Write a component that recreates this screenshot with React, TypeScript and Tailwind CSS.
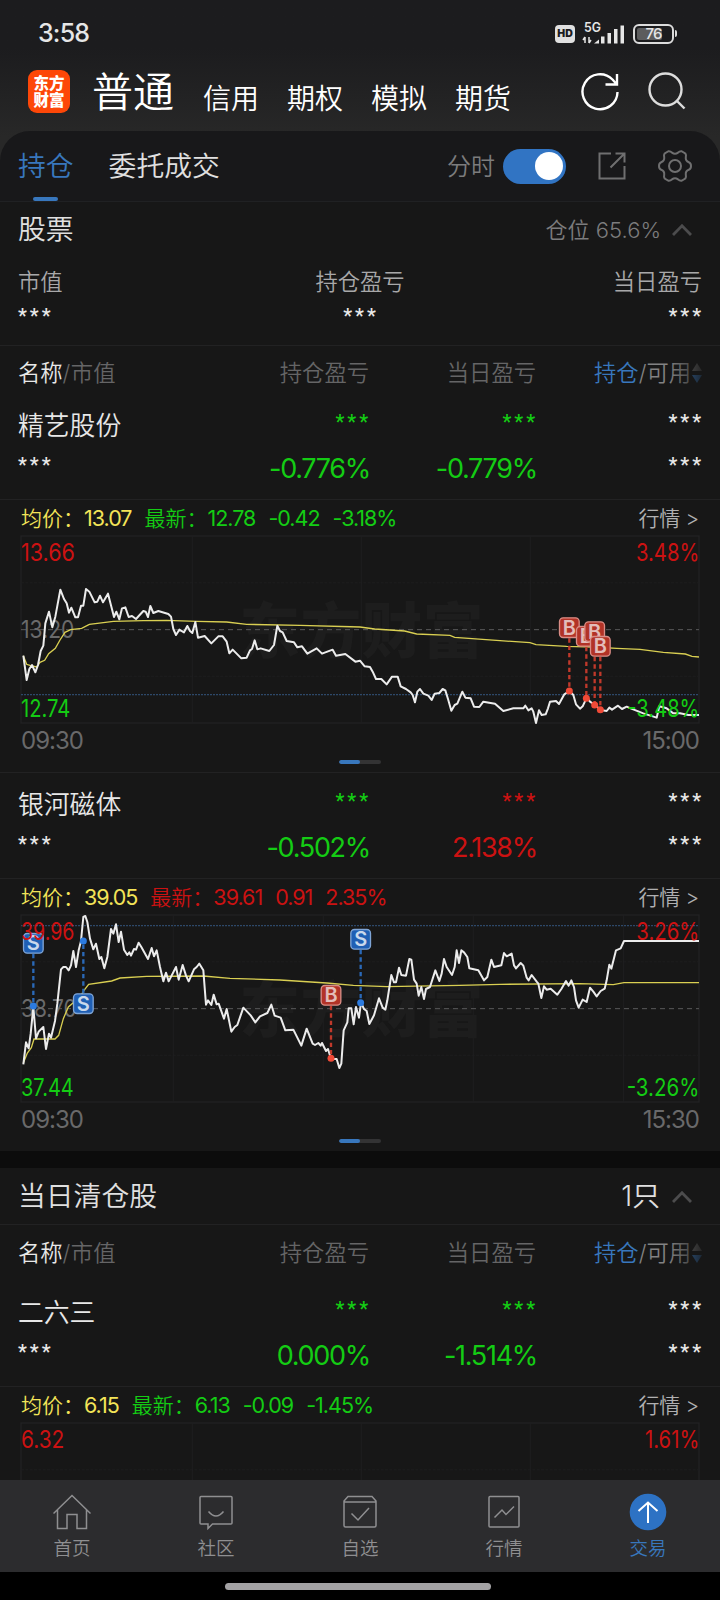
import type { ReactNode } from "react";
import clsx from "clsx";

const UP = "#cc1212";
const DOWN = "#14cc14";

type Marker = { kind: "B" | "S"; x: number; y: number; dotY: number };

// text and its width in chart units
type Label = [string, number];

type ChartData = {
  high: Label;
  mid?: Label;
  low?: Label;
  highPct: Label;
  lowPct?: Label;
  columns: number[];
  latestY?: number;
  price?: string;
  average?: string;
  markers?: Marker[];
};

type Stock = {
  name: string;
  holdPct: string;
  holdUp?: boolean;
  dayPct: string;
  dayUp?: boolean;
  average: string;
  latest: string[];
  latestUp?: boolean;
  close?: string;
  chart: ChartData;
};

const jingyi: Stock = {
  name: "精艺股份",
  holdPct: "-0.776%",
  dayPct: "-0.779%",
  average: "13.07",
  latest: ["12.78", "-0.42", "-3.18%"],
  close: "15:00",
  chart: {
    high: ["13.66", 162],
    mid: ["13.20", 160],
    low: ["12.74", 148],
    highPct: ["3.48%", 190],
    lowPct: ["-3.48%", 216],
    columns: [514, 1021, 1528],
    latestY: 476,
    price:
      "7,359 17,432 25,399 33,387 43,409 51,387 59,345 67,329 73,262 84,227 94,274 103,242 118,161 129,189 137,202 144,230 151,215 163,244 171,244 180,209 187,209 195,159 205,167 221,199 229,197 237,179 246,199 261,173 279,243 286,227 295,250 303,217 313,214 323,243 333,240 345,249 367,225 374,227 381,243 388,210 397,231 412,225 442,234 450,242 457,279 465,297 475,281 489,289 499,270 507,285 514,291 523,258 531,305 551,300 571,322 592,301 605,301 617,317 625,352 635,341 661,367 677,365 687,343 693,339 701,313 709,340 719,337 745,345 759,327 769,269 777,285 785,289 797,315 819,319 829,334 843,331 859,353 887,337 903,353 935,341 945,359 973,354 1003,377 1017,374 1031,391 1047,393 1055,407 1065,429 1081,429 1097,445 1113,422 1130,422 1139,451 1155,459 1169,469 1175,477 1182,499 1189,467 1197,459 1207,473 1222,479 1232,492 1241,473 1255,471 1265,459 1273,463 1281,489 1291,524 1301,507 1309,503 1324,467 1333,485 1349,487 1359,512 1375,513 1387,497 1422,503 1447,525 1477,517 1507,517 1513,509 1522,523 1532,517 1537,527 1545,561 1554,523 1562,537 1574,535 1581,517 1587,497 1605,495 1614,504 1630,475 1645,465 1657,477 1665,505 1677,518 1685,511 1697,485 1707,497 1722,507 1739,522 1757,525 1765,515 1773,521 1791,509 1803,519 1817,512 1829,517 1867,532 1907,545 1915,511 1937,517 1957,532 1977,532 2002,537 2034,537",
    average:
      "7,359 17,385 29,389 47,393 57,379 71,373 83,353 103,337 117,312 132,289 149,281 182,277 205,265 277,256 367,254 437,253 527,256 617,258 677,265 837,268 1017,273 1061,279 1151,285 1187,294 1287,298 1301,304 1437,314 1527,320 1545,326 1637,331 1717,333 1787,337 1857,340 1927,349 1993,354 2013,361 2034,363",
    markers: [
      { kind: "B", x: 1645, y: 275, dotY: 465 },
      { kind: "B", x: 1696, y: 301, dotY: 487 },
      { kind: "B", x: 1721, y: 287, dotY: 507 },
      { kind: "B", x: 1738, y: 331, dotY: 521 },
    ],
  },
};

const yinhe: Stock = {
  name: "银河磁体",
  holdPct: "-0.502%",
  dayPct: "2.138%",
  dayUp: true,
  average: "39.05",
  latest: ["39.61", "0.91", "2.35%"],
  latestUp: true,
  close: "15:30",
  chart: {
    high: ["39.96", 160],
    mid: ["38.70", 167],
    low: ["37.44", 158],
    highPct: ["3.26%", 189],
    lowPct: ["-3.26%", 218],
    columns: [457, 907, 1357, 1808],
    latestY: 32,
    price:
      "7,448 15,382 23,400 29,356 37,276 45,370 53,350 67,336 75,402 84,356 90,368 102,318 109,266 120,163 127,156 135,156 143,166 150,151 157,108 165,156 173,106 180,78 187,6 193,3 199,21 207,71 217,103 225,86 235,132 241,126 250,160 259,126 270,42 277,56 285,28 293,81 300,50 309,104 319,120 325,112 330,122 339,102 345,104 353,83 361,96 381,132 392,99 399,124 407,106 417,156 427,199 435,173 443,199 465,156 473,194 485,150 495,182 503,199 519,163 527,156 535,146 547,166 555,269 561,256 571,270 578,239 587,268 593,266 609,311 617,282 631,350 641,336 649,330 667,278 689,301 703,322 717,304 739,294 751,269 761,302 779,308 793,346 817,344 841,392 857,341 875,386 882,390 892,384 899,392 903,384 915,408 921,402 930,431 947,432 955,459 961,446 968,346 979,322 983,280 991,280 998,328 1005,276 1014,308 1020,263 1029,282 1037,288 1045,327 1059,301 1074,250 1085,278 1093,284 1099,256 1111,180 1119,202 1125,202 1134,158 1141,180 1155,182 1165,132 1171,134 1179,194 1187,206 1193,242 1201,216 1209,252 1215,222 1227,216 1243,166 1255,198 1262,176 1269,132 1277,156 1293,180 1301,156 1307,106 1314,144 1321,106 1329,112 1339,126 1345,160 1372,166 1389,196 1399,186 1411,134 1419,156 1441,151 1449,114 1457,124 1472,116 1479,151 1485,160 1499,144 1507,152 1517,188 1523,196 1532,180 1547,200 1552,206 1561,249 1569,214 1577,224 1589,221 1609,239 1621,222 1635,198 1643,212 1651,196 1659,216 1665,256 1673,278 1685,254 1697,261 1707,218 1717,230 1727,244 1739,228 1751,221 1757,196 1765,149 1771,161 1785,106 1799,100 1809,78 2034,78",
    average:
      "7,444 19,414 31,398 39,372 102,372 113,361 127,311 142,276 177,246 189,226 203,208 272,198 297,189 377,184 547,183 627,190 777,195 917,204 997,211 1097,215 1317,211 1437,208 1677,206 1777,209 1809,203 2034,203",
    markers: [
      { kind: "S", x: 37, y: 85, dotY: 273 },
      { kind: "S", x: 187, y: 266, dotY: 78 },
      { kind: "B", x: 930, y: 241, dotY: 430 },
      { kind: "S", x: 1019, y: 73, dotY: 263 },
    ],
  },
};

const erliusan: Stock = {
  name: "二六三",
  holdPct: "0.000%",
  dayPct: "-1.514%",
  average: "6.15",
  latest: ["6.13", "-0.09", "-1.45%"],
  chart: { high: ["6.32", 130], highPct: ["1.61%", 163], columns: [514, 1021, 1528] },
};

const ChartLabel = ({ label, x, y, fill, end }: { label: Label; x: number; y: number; fill: string; end?: boolean }) => (
  <text
    x={x}
    y={y}
    fill={fill}
    fontSize="73"
    textAnchor={end ? "end" : "start"}
    textLength={label[1]}
    lengthAdjust="spacingAndGlyphs"
  >
    {label[0]}
  </text>
);

// The chart area is 678x187 px; drawing units are thirds of a pixel.
const Chart = ({ data }: { data: ChartData }) => (
  <svg
    viewBox="0 0 2034 561"
    className="mx-[21px] block h-[187px] w-[678px] shrink-0 overflow-visible font-normal"
    fill="none"
  >
    <g stroke="#222223" strokeWidth="3">
      <rect x="0" y="0" width="2034" height="561" strokeWidth="4" />
      <path d="M0 140.5H2034M0 421H2034" strokeDasharray="9 4" stroke="#1e1e1f" />
      {data.columns.map((x) => (
        <path key={x} d={`M${x} 0V561`} stroke="#1f1f20" />
      ))}
    </g>
    {data.mid && (
      <>
        <text x="655" y="351" fontSize="182" fontWeight="900" fill="#1d1d1d" textLength="732">
          东方财富
        </text>
        <path d="M0 281H2034" stroke="#5a5a5b" strokeWidth="3" strokeDasharray="15 12" />
        <ChartLabel label={data.mid} x={0} y={307} fill="#6a6a6b" />
        <path
          d={`M0 ${data.latestY}H2034`}
          stroke="#2d4869"
          strokeWidth="4"
          strokeDasharray="6 3"
        />
        <polyline points={data.average} stroke="#d9cf52" strokeWidth="4" />
        <polyline points={data.price} stroke="#ececec" strokeWidth="6" strokeLinejoin="round" />
      </>
    )}
    {data.markers?.map((m) => {
      const red = m.kind === "B";
      return (
        <g key={m.x}>
          <path
            d={`M${m.x} ${m.y < m.dotY ? m.y + 32 : m.y - 32}V${m.dotY}`}
            stroke={red ? "#c0392b" : "#2a69b8"}
            strokeWidth="7"
            strokeDasharray="13 9"
          />
          <circle cx={m.x} cy={m.dotY} r="10.5" fill={red ? "#f04a37" : "#2c7be0"} />
          <rect
            x={m.x - 29.5}
            y={m.y - 29.5}
            width="59"
            height="59"
            rx="11"
            fill={red ? "#b23327" : "#1f5fb4"}
            stroke={red ? "#d98d86" : "#7fa5d6"}
            strokeWidth="4"
          />
          <text
            x={m.x}
            y={m.y + 21}
            textAnchor="middle"
            fontSize="60"
            fontWeight="600"
            fill={red ? "#e3bdb9" : "#c9d8ec"}
          >
            {m.kind}
          </text>
        </g>
      );
    })}
    <ChartLabel label={data.high} x={0} y={75} fill={UP} />
    <ChartLabel label={data.highPct} x={2035} y={75} fill={UP} end />
    {data.low && <ChartLabel label={data.low} x={0} y={544} fill={DOWN} />}
    {data.lowPct && <ChartLabel label={data.lowPct} x={2035} y={544} fill={DOWN} end />}
  </svg>
);

const Stars = ({ className }: { className?: string }) => (
  <div
    className={clsx(
      "mr-[-2px] h-[22px] font-[Roboto] text-[20px] leading-[27px] font-medium tracking-[3px]",
      className,
    )}
  >
    ***
  </div>
);

const Cell = ({ pct, up }: { pct: string; up?: boolean }) => (
  <div className={clsx("flex flex-col items-end", up ? "text-[#cc1212]" : "text-[#14cc14]")}>
    <Stars className="mt-[15px]" />
    <div className="-mr-[1px] mt-[21px] text-[27px] leading-[34px] font-normal tracking-[-1.3px]">{pct}</div>
  </div>
);

const columns = "grid grid-cols-[184px_167px_167px_166px] pl-[18px]";

const TableHead = ({ className }: { className: string }) => (
  <div className={clsx(columns, "relative shrink-0 text-[22.3px] leading-[28px] text-[#656566]", className)}>
    <div>
      <span className="text-[#e8e8e8]">名称</span>
      <span className="tracking-[0.3px]">/市值</span>
    </div>
    <div className="text-right">持仓盈亏</div>
    <div className="text-right">当日盈亏</div>
    <div className="flex h-[28px] items-center justify-end text-[#828283]">
      <span className="text-[#3877bd]">持仓</span>/可用
      <svg viewBox="0 0 10 20" className="ml-[1px] h-[20px] w-[10px]">
        <path d="M5 0L10 8H0Z" fill="#707071" />
        <path d="M5 20L0 12H10Z" fill="#3877bd" />
      </svg>
    </div>
    <div className="absolute inset-y-0 right-0 w-[52px] bg-linear-to-r from-transparent to-[#171717] to-80%" />
  </div>
);

const StockBlock = ({ stock }: { stock: Stock }) => (
  <section className="flex h-[378px] shrink-0 flex-col">
    <div className={clsx(columns, "h-[105px] shrink-0 text-[#e8e8e8]")}>
      <div>
        <div className="mt-[16px] text-[25.8px] leading-[32px]">{stock.name}</div>
        <Stars className="mt-[10px]" />
      </div>
      <div className="flex justify-end">
        <Cell pct={stock.holdPct} up={stock.holdUp} />
      </div>
      <div className="flex justify-end">
        <Cell pct={stock.dayPct} up={stock.dayUp} />
      </div>
      <div className="flex flex-col items-end">
        <Stars className="mt-[15px]" />
        <Stars className="mt-[21px]" />
      </div>
    </div>
    <div className="flex h-[37px] shrink-0 items-center border-t border-[#222223] px-[21px] pt-px text-[21.5px] tracking-[-1px]">
      <span className="text-[#f3e458]">
        <span className="text-[21px] tracking-normal">均价：</span>
        <span className="font-normal">{stock.average}</span>
      </span>
      <span
        className={clsx(
          "ml-[13px] flex gap-[13px]",
          stock.latestUp ? "text-[#cc1212]" : "text-[#14cc14]",
        )}
      >
        <span>
          <span className="text-[21px] tracking-normal">最新：</span>
          <span className="font-normal">{stock.latest[0]}</span>
        </span>
        <span className="font-normal">{stock.latest[1]}</span>
        <span className="font-normal">{stock.latest[2]}</span>
      </span>
      <span className="ml-auto text-[21px] tracking-[-0.3px] text-[#b0b0b1]">行情 &gt;</span>
    </div>
    <Chart data={stock.chart} />
    {stock.close && (
      <>
        <div className="flex h-[35px] shrink-0 items-center justify-between pt-px px-[21px] text-[24px] font-normal tracking-[-1px] text-[#69696a]">
          <span>09:30</span>
          <span>{stock.close}</span>
        </div>
        <div className="mx-auto mt-[2px] flex h-[4px] w-[42px] overflow-hidden rounded-full bg-[#333334]">
          <div className="w-1/2 rounded-full bg-[#3877bd]" />
        </div>
      </>
    )}
  </section>
);

const Chevron = () => (
  <svg viewBox="0 0 20 12" className="h-[12px] w-[20px]" fill="none" stroke="#4c4c4d" strokeWidth="2.8">
    <path d="M1 11L10 1.8L19 11" />
  </svg>
);

const StatusBar = () => (
  <div className="flex h-[65px] shrink-0 items-center pt-[2px] pl-[38px] pr-[43px] text-[#e6e6e6]">
    <span className="text-[25px] font-medium tracking-[-0.8px]">3:58</span>
    <div className="ml-auto flex items-center">
      <div className="flex h-[18px] w-[20px] items-center justify-center rounded-[4px] bg-[#e0e0e0] text-[10.5px] font-black text-[#1c1c1e]">
        HD
      </div>
      <svg viewBox="0 0 44 22" className="ml-[7px] h-[22px] w-[44px] overflow-visible" fill="#e6e6e6">
        <text x="2" y="9" fontSize="13" fontWeight="600" textLength="17" lengthAdjust="spacingAndGlyphs">
          5G
        </text>
        <path d="M3 14V20M3 14L1 17M7 20V14M7 20L9 17" stroke="#e6e6e6" strokeWidth="1.5" />
        <path d="M12 20.5L17 16.5V20.5ZM19 13.5H22.5V20.5H19ZM25.5 10H29V20.5H25.5ZM32 6H35.5V20.5H32ZM38.5 2.5H42V20.5H38.5Z" />
      </svg>
      <div className="ml-[7px] flex h-[20px] w-[41px] rounded-[6px] border-2 border-[#dcdcdc] p-[2px]">
        <div className="relative flex w-full items-center justify-center">
          <div className="absolute inset-y-0 left-0 w-[25px] rounded-[2px] bg-[#5c5c5d]" />
          <span className="relative text-[15px] leading-none font-medium tracking-[-0.8px]">76</span>
        </div>
      </div>
      <div className="ml-[1px] h-[7px] w-[2px] rounded-r bg-[#dcdcdc]" />
    </div>
  </div>
);

const Header = () => (
  <div className="flex h-[66px] shrink-0 items-start pl-[28px] text-white">
    <div className="mt-[5px] flex h-[43px] w-[42px] flex-col items-center justify-center rounded-[9px] bg-[#fd4708] text-[15.5px] leading-[17px] font-black">
      <span>东方</span>
      <span>财富</span>
    </div>
    <div className="ml-[22px] mt-[4px] text-[41px] leading-[46px]">普通</div>
    <div className="ml-[29px] mt-[16px] flex gap-[28px] text-[28px] leading-[36px]">
      <span>信用</span>
      <span>期权</span>
      <span>模拟</span>
      <span>期货</span>
    </div>
    <svg viewBox="0 0 40 40" className="ml-[69px] mt-[7px] h-[40px] w-[40px]" fill="none" stroke="#fff" strokeWidth="2.4">
      <path d="M37.5 20A17.5 17.5 0 1 1 32.5 7.5L36.5 12M37 2V12.5H25.5" />
    </svg>
    <svg viewBox="0 0 40 40" className="ml-[28px] mt-[7px] h-[40px] w-[40px]" fill="none" stroke="#ddd" strokeWidth="2.4">
      <circle cx="17.5" cy="17.5" r="16" />
      <path d="M28.5 28.5L36.5 36.5" />
    </svg>
  </div>
);

const Tabs = () => (
  <div className="flex h-[71px] shrink-0 items-center rounded-t-[30px] border-b border-[#202123] bg-[#18181a] pl-[18px] text-[27.8px]">
    <div className="relative flex h-full items-center pt-[2px] text-[#3877bd]">
      持仓
      <span className="absolute bottom-0 left-[15px] h-[4px] w-[25px] rounded-full bg-[#3877bd]" />
    </div>
    <div className="ml-[35px] pt-[2px] text-[#e0e0e0]">委托成交</div>
    <div className="ml-auto pt-px text-[24px] text-[#7c7c7d]">分时</div>
    <div className="ml-[8px] flex h-[35px] w-[63px] items-center justify-end rounded-full bg-[#3174c3] pr-[3px]">
      <div className="size-[28px] rounded-full bg-white" />
    </div>
    <svg viewBox="0 0 28 28" className="ml-[32px] size-[28px]" fill="none" stroke="#6f6f70" strokeWidth="2">
      <path d="M13 1.5H1.5V26.5H26.5V14M17.5 1.5H26.5V10.5M26.5 1.5L12.5 15.5" />
    </svg>
    <svg viewBox="0 0 34 34" className="ml-[32px] mr-[28px] size-[34px]" fill="none" stroke="#6f6f70" strokeWidth="2">
      <path d="M10.5 2.2Q12.5 2 14 3.6Q17 6 20 3.6Q21.5 2 23.5 2.2L27.3 4.4Q28.4 6 27.8 8.2Q27.3 12 30.8 13.2Q33 14 33 17Q33 20 30.8 20.8Q27.3 22 27.8 25.8Q28.4 28 27.3 29.6L23.5 31.8Q21.5 32 20 30.4Q17 28 14 30.4Q12.5 32 10.5 31.8L6.7 29.6Q5.6 28 6.2 25.8Q6.7 22 3.2 20.8Q1 20 1 17Q1 14 3.2 13.2Q6.7 12 6.2 8.2Q5.6 6 6.7 4.4Z" />
      <circle cx="17" cy="17" r="6" />
    </svg>
  </div>
);

const Summary = () => (
  <div className="h-[144px] shrink-0 border-b border-[#222223]">
    <div className="flex h-[56px] items-center pl-[18px] pr-[28px]">
      <span className="text-[27.8px] text-[#e0e0e0]">股票</span>
      <span className="ml-auto mr-[11px] text-[22px] text-[#7c7c7d]">仓位 65.6%</span>
      <Chevron />
    </div>
    <div className="grid grid-cols-3 px-[18px] text-[22.3px] leading-[30px] text-[#a8a8a9]">
      {["市值", "持仓盈亏", "当日盈亏"].map((label, i) => (
        <div
          key={label}
          className={clsx("flex flex-col", ["items-start", "items-center", "items-end"][i])}
        >
          <span className="mt-[9px]">{label}</span>
          <Stars className="mt-[6px] text-[#e8e8e8]" />
        </div>
      ))}
    </div>
  </div>
);

const NavItem = ({ label, active, children }: { label: string; active?: boolean; children: ReactNode }) => (
  <div className={clsx("flex w-[144px] flex-col items-center", active ? "text-[#3877bd]" : "text-[#8f8f91]")}>
    <svg viewBox="0 0 38 38" className="mt-[13px] size-[38px]" fill="none" stroke="currentColor" strokeWidth="1.5">
      {children}
    </svg>
    <span className="mt-[4px] text-[18.5px] leading-[26px]">{label}</span>
  </div>
);

const BottomNav = () => (
  <nav className="flex h-[92px] shrink-0 bg-[#2c2c2e]">
    <NavItem label="首页">
      <path d="M0.5 20.5L19 2.5L37.5 20.5M4.5 17V35.5H14V21.5H24V35.5H33.5V17" />
    </NavItem>
    <NavItem label="社区">
      <path d="M4 3.5H34Q35 3.5 35 4.5V30Q35 31 34 31H15.5L11 35.5V31H4Q3 31 3 30V4.5Q3 3.5 4 3.5ZM11.5 18.5Q19 27.5 26.5 18.5" />
    </NavItem>
    <NavItem label="自选">
      <path d="M7 3.5H31L35 8V32.5Q35 34 33.5 34H4.5Q3 34 3 32.5V8ZM3 9H35M10.5 20.5L17 27L28 15" />
    </NavItem>
    <NavItem label="行情">
      <rect x="4" y="3.5" width="30" height="30.5" rx="1" />
      <path d="M9.5 24.5L17 17L21 21.5L29 13.5" />
    </NavItem>
    <NavItem label="交易" active>
      <circle cx="19" cy="19" r="18.3" fill="#2d72c4" stroke="none" />
      <path d="M19 30V9.5M9.5 18L19 9.5L28.5 18" stroke="#fff" strokeWidth="2" />
    </NavItem>
  </nav>
);

export default function App() {
  return (
    <div className="flex h-[1600px] w-[720px] flex-col overflow-hidden bg-black font-[Inter,'Noto_Sans_CJK_SC',sans-serif] font-[350]">
      <div className="flex h-[1480px] shrink-0 flex-col overflow-hidden bg-[#171717]">
        <div className="-mb-[30px] flex h-[161px] shrink-0 flex-col bg-linear-to-b from-[#1c1c1e] from-30% to-[#282828] to-85%">
          <StatusBar />
          <Header />
        </div>
        <Tabs />
        <Summary />
        <TableHead className="h-[48px] pt-[13px]" />
        <StockBlock stock={jingyi} />
        <div className="h-px shrink-0 bg-[#222223]" />
        <StockBlock stock={yinhe} />
        <div className="h-[17px] shrink-0 bg-[#0c0c0c]" />
        <div className="flex h-[57px] shrink-0 items-center border-b border-[#222223] pt-[2px] pl-[18px] pr-[28px] text-[27.8px] text-[#e0e0e0]">
          <span>当日清仓股</span>
          <span className="ml-auto mr-[12px]">1只</span>
          <Chevron />
        </div>
        <TableHead className="h-[56px] pt-[14px]" />
        <StockBlock stock={erliusan} />
      </div>
      <BottomNav />
      <div className="mt-[11px] ml-[225px] h-[7px] w-[266px] rounded-full bg-[#a3a2a4]" />
    </div>
  );
}
